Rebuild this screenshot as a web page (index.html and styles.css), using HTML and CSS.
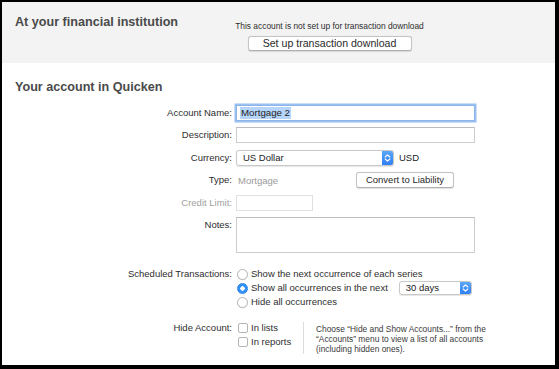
FILE: index.html
```html
<!DOCTYPE html>
<html>
<head>
<meta charset="utf-8">
<link rel="stylesheet" href="styles.css">
</head>
<body>
<div class="frame">
  <div class="band">
    <h2 class="title title-band">At your financial institution</h2>
    <div class="dl">
      <p class="note">This account is not set up for transaction download</p>
      <button class="btn btn-setup">Set up transaction download</button>
    </div>
  </div>
  <div class="main">
    <h2 class="title">Your account in Quicken</h2>
    <div class="form">
      <div class="lbl">Account Name:</div>
      <div class="field"><div class="input input-focus"><span class="sel">Mortgage 2</span></div></div>

      <div class="lbl">Description:</div>
      <div class="field"><div class="input"></div></div>

      <div class="lbl">Currency:</div>
      <div class="field">
        <div class="popup popup-currency"><span class="popup-text">US Dollar</span><span class="stepper"><svg width="7" height="10" viewBox="0 0 7 10"><path d="M1.2 4 L3.5 1.8 L5.8 4 M1.2 6 L3.5 8.2 L5.8 6" fill="none" stroke="#fff" stroke-width="1.1" stroke-linecap="round" stroke-linejoin="round"/></svg></span></div>
        <span class="code">USD</span>
      </div>

      <div class="lbl">Type:</div>
      <div class="field">
        <span class="type-val">Mortgage</span>
        <button class="btn btn-convert">Convert to Liability</button>
      </div>

      <div class="lbl lbl-dim">Credit Limit:</div>
      <div class="field"><div class="input input-small input-disabled"></div></div>

      <div class="lbl lbl-top">Notes:</div>
      <div class="field field-tall"><div class="textarea"></div></div>
    </div>

    <div class="form-sched">
      <div class="lbl lbl-top lbl-14">Scheduled Transactions:</div>
      <div class="opts">
        <div class="opt"><span class="radio"></span><span>Show the next occurrence of each series</span></div>
        <div class="opt"><span class="radio radio-on"></span><span>Show all occurrences in the next</span>
          <div class="popup popup-days"><span class="popup-text">30 days</span><span class="stepper"><svg width="7" height="10" viewBox="0 0 7 10"><path d="M1.2 4 L3.5 1.8 L5.8 4 M1.2 6 L3.5 8.2 L5.8 6" fill="none" stroke="#fff" stroke-width="1.1" stroke-linecap="round" stroke-linejoin="round"/></svg></span></div>
        </div>
        <div class="opt"><span class="radio"></span><span>Hide all occurrences</span></div>
      </div>
    </div>

    <div class="form-hide">
      <div class="lbl lbl-top lbl-14">Hide Account:</div>
      <div class="hide-row">
        <div class="checks">
          <div class="opt"><span class="check"></span><span>In lists</span></div>
          <div class="opt"><span class="check"></span><span>In reports</span></div>
        </div>
        <p class="help">Choose “Hide and Show Accounts...” from the “Accounts” menu to view a list of all accounts (including hidden ones).</p>
      </div>
    </div>
  </div>
</div>
</body>
</html>
```

FILE: styles.css
```css
* { box-sizing: border-box; }
html, body { margin: 0; padding: 0; background: #000; }
body {
  font-family: "Liberation Sans", Arial, Helvetica, sans-serif;
  font-size: 9.5px;
  color: #2e2e2e;
}
.frame {
  width: 559px;
  height: 369px;
  border-style: solid;
  border-color: #000;
  border-width: 2px 4px 4px 2px;
  background: #fff;
  overflow: hidden;
}
.band {
  background: #f3f3f3;
  height: 61px;
  display: flex;
  padding: 13px 0 0 13px;
}
.title {
  margin: 0;
  font-size: 12.6px;
  line-height: 15px;
  font-weight: bold;
  color: #4a4a4a;
}
.title-band { width: 220px; flex: none; }
.dl {
  width: 189px;
  display: flex;
  flex-direction: column;
  align-items: center;
  padding-top: 6px;
}
.note {
  margin: 0;
  font-size: 8.4px;
  line-height: 10px;
  color: #2e2e2e;
  white-space: nowrap;
}
.btn {
  font-family: inherit;
  background: #fff;
  border: 1px solid #c4c4c4;
  border-bottom-color: #b0b0b0;
  border-radius: 3px;
  box-shadow: 0 0.5px 1px rgba(0,0,0,0.12);
  color: #2a2a2a;
  padding: 0;
  margin: 0;
}
.btn-setup {
  margin-top: 4.5px;
  width: 164px;
  height: 15px;
  font-size: 10.6px;
  line-height: 13px;
}
.main {
  padding-top: 17px;
}
.main .title { padding-left: 13px; }
.form, .form-sched, .form-hide {
  display: grid;
  grid-template-columns: 230px 1fr;
  column-gap: 4px;
}
.form {
  margin-top: 10px;
  grid-template-rows: repeat(5, 16px) 36px;
  row-gap: 6.4px;
}
.lbl {
  text-align: right;
  line-height: 16px;
  white-space: nowrap;
  align-self: center;
}
.lbl-top { align-self: start; }
.lbl-14 { line-height: 14px; }
.lbl-dim { color: #a0a0a0; }
.field {
  display: flex;
  align-items: center;
  height: 16px;
}
.field-tall { height: 36px; align-items: flex-start; }
.input {
  width: 239px;
  height: 16px;
  border: 1px solid #cdcdcd;
  border-top-color: #bdbdbd;
  background: #fff;
  padding-left: 3px;
  display: flex;
  align-items: center;
  color: #222;
  font-size: 9.7px;
}
.input-focus {
  border-color: #8fb5e6;
  box-shadow: 0 0 0 1.5px #98c0f2;
}
.sel { background: #b5d5fb; padding: 0 1px; line-height: 12px; }
.input-small { width: 77px; }
.input-disabled { border-color: #e0e0e0; }
.popup {
  display: flex;
  align-items: stretch;
  height: 16px;
  border: 1px solid #c9c9c9;
  border-radius: 3px;
  background: #fff;
  box-shadow: 0 0.5px 1px rgba(0,0,0,0.1);
  overflow: hidden;
}
.popup-currency { width: 158px; }
.popup-text {
  flex: 1;
  padding-left: 6px;
  line-height: 14px;
  color: #222;
}
.stepper {
  width: 11px;
  background: linear-gradient(#5aa7fa, #2f7ff2);
  display: flex;
  align-items: center;
  justify-content: center;
}
.code { margin-left: 5px; color: #222; }
.type-val {
  width: 120px;
  padding-left: 2px;
  color: #9a9a9a;
}
.btn-convert {
  width: 98px;
  height: 16px;
  font-size: 9.5px;
  line-height: 14px;
}
.textarea {
  width: 239px;
  height: 36px;
  border: 1px solid #cdcdcd;
  border-top-color: #bdbdbd;
  background: #fff;
}
.form-sched { margin-top: 14.5px; }
.opts { display: flex; flex-direction: column; }
.opt {
  display: flex;
  align-items: center;
  height: 14px;
  line-height: 14px;
  white-space: nowrap;
}
.radio {
  width: 11px;
  height: 11px;
  border-radius: 50%;
  border: 1px solid #b4b4b4;
  background: #fff;
  margin-left: 1px;
  margin-right: 3px;
  flex: none;
  box-shadow: 0 0.5px 0.5px rgba(0,0,0,0.08);
}
.radio-on {
  border-color: #2d86f0;
  background: radial-gradient(circle, #fff 0 2px, #3391f6 2.4px);
}
.popup-days {
  width: 73px;
  height: 14px;
  margin-left: 11px;
}
.popup-days .popup-text { line-height: 12px; }
.form-hide { margin-top: 11.5px; }
.hide-row { display: flex; align-items: flex-start; }
.checks { width: 67px; flex: none; }
.check {
  width: 10px;
  height: 10px;
  border: 1px solid #b4b4b4;
  border-radius: 2px;
  background: #fff;
  margin-left: 2px;
  margin-right: 3px;
  flex: none;
}
.help {
  margin: 1px 0 0 0;
  border-left: 1px solid #dcdcdc;
  padding: 2px 0 0 12px;
  font-size: 8.4px;
  line-height: 10px;
  width: 190px;
  color: #3a3a3a;
}
```
